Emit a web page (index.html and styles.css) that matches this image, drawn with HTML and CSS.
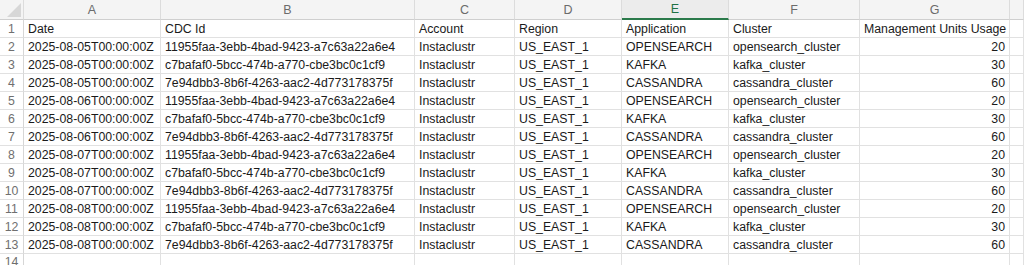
FILE: index.html
```html
<!DOCTYPE html>
<html>
<head>
<meta charset="utf-8">
<link rel="stylesheet" href="styles.css">
</head>
<body>
<div class="sheet">
  <div class="row head">
    <div class="corner"><span class="tri"></span></div>
    <div class="col">A</div><div class="col">B</div><div class="col">C</div><div class="col">D</div>
    <div class="col sel">E</div><div class="col">F</div><div class="col">G</div><div class="col"></div>
  </div>
  <div class="row"><div class="num">1</div><div class="c">Date</div><div class="c">CDC Id</div><div class="c">Account</div><div class="c">Region</div><div class="c">Application</div><div class="c">Cluster</div><div class="c">Management Units Usage</div><div class="c"></div></div>
  <div class="row"><div class="num">2</div><div class="c">2025-08-05T00:00:00Z</div><div class="c">11955faa-3ebb-4bad-9423-a7c63a22a6e4</div><div class="c">Instaclustr</div><div class="c">US_EAST_1</div><div class="c">OPENSEARCH</div><div class="c">opensearch_cluster</div><div class="c r">20</div><div class="c"></div></div>
  <div class="row"><div class="num">3</div><div class="c">2025-08-05T00:00:00Z</div><div class="c">c7bafaf0-5bcc-474b-a770-cbe3bc0c1cf9</div><div class="c">Instaclustr</div><div class="c">US_EAST_1</div><div class="c">KAFKA</div><div class="c">kafka_cluster</div><div class="c r">30</div><div class="c"></div></div>
  <div class="row"><div class="num">4</div><div class="c">2025-08-05T00:00:00Z</div><div class="c">7e94dbb3-8b6f-4263-aac2-4d773178375f</div><div class="c">Instaclustr</div><div class="c">US_EAST_1</div><div class="c">CASSANDRA</div><div class="c">cassandra_cluster</div><div class="c r">60</div><div class="c"></div></div>
  <div class="row"><div class="num">5</div><div class="c">2025-08-06T00:00:00Z</div><div class="c">11955faa-3ebb-4bad-9423-a7c63a22a6e4</div><div class="c">Instaclustr</div><div class="c">US_EAST_1</div><div class="c">OPENSEARCH</div><div class="c">opensearch_cluster</div><div class="c r">20</div><div class="c"></div></div>
  <div class="row"><div class="num">6</div><div class="c">2025-08-06T00:00:00Z</div><div class="c">c7bafaf0-5bcc-474b-a770-cbe3bc0c1cf9</div><div class="c">Instaclustr</div><div class="c">US_EAST_1</div><div class="c">KAFKA</div><div class="c">kafka_cluster</div><div class="c r">30</div><div class="c"></div></div>
  <div class="row"><div class="num">7</div><div class="c">2025-08-06T00:00:00Z</div><div class="c">7e94dbb3-8b6f-4263-aac2-4d773178375f</div><div class="c">Instaclustr</div><div class="c">US_EAST_1</div><div class="c">CASSANDRA</div><div class="c">cassandra_cluster</div><div class="c r">60</div><div class="c"></div></div>
  <div class="row"><div class="num">8</div><div class="c">2025-08-07T00:00:00Z</div><div class="c">11955faa-3ebb-4bad-9423-a7c63a22a6e4</div><div class="c">Instaclustr</div><div class="c">US_EAST_1</div><div class="c">OPENSEARCH</div><div class="c">opensearch_cluster</div><div class="c r">20</div><div class="c"></div></div>
  <div class="row"><div class="num">9</div><div class="c">2025-08-07T00:00:00Z</div><div class="c">c7bafaf0-5bcc-474b-a770-cbe3bc0c1cf9</div><div class="c">Instaclustr</div><div class="c">US_EAST_1</div><div class="c">KAFKA</div><div class="c">kafka_cluster</div><div class="c r">30</div><div class="c"></div></div>
  <div class="row"><div class="num">10</div><div class="c">2025-08-07T00:00:00Z</div><div class="c">7e94dbb3-8b6f-4263-aac2-4d773178375f</div><div class="c">Instaclustr</div><div class="c">US_EAST_1</div><div class="c">CASSANDRA</div><div class="c">cassandra_cluster</div><div class="c r">60</div><div class="c"></div></div>
  <div class="row"><div class="num">11</div><div class="c">2025-08-08T00:00:00Z</div><div class="c">11955faa-3ebb-4bad-9423-a7c63a22a6e4</div><div class="c">Instaclustr</div><div class="c">US_EAST_1</div><div class="c">OPENSEARCH</div><div class="c">opensearch_cluster</div><div class="c r">20</div><div class="c"></div></div>
  <div class="row"><div class="num">12</div><div class="c">2025-08-08T00:00:00Z</div><div class="c">c7bafaf0-5bcc-474b-a770-cbe3bc0c1cf9</div><div class="c">Instaclustr</div><div class="c">US_EAST_1</div><div class="c">KAFKA</div><div class="c">kafka_cluster</div><div class="c r">30</div><div class="c"></div></div>
  <div class="row"><div class="num">13</div><div class="c">2025-08-08T00:00:00Z</div><div class="c">7e94dbb3-8b6f-4263-aac2-4d773178375f</div><div class="c">Instaclustr</div><div class="c">US_EAST_1</div><div class="c">CASSANDRA</div><div class="c">cassandra_cluster</div><div class="c r">60</div><div class="c"></div></div>
  <div class="row last"><div class="num">14</div><div class="c"></div><div class="c"></div><div class="c"></div><div class="c"></div><div class="c"></div><div class="c"></div><div class="c"></div><div class="c"></div></div>
</div>
</body>
</html>
```
FILE: styles.css
```css
html, body {
  margin: 0;
  padding: 0;
  background: #ffffff;
}
body {
  font-family: "Liberation Sans", Arial, sans-serif;
  font-size: 12.3px;
  color: #1a1a1a;
  overflow: hidden;
}
.sheet {
  width: 1024px;
  height: 265px;
  overflow: hidden;
}
.row {
  display: grid;
  grid-template-columns: 24px 137px 254px 100px 107px 107px 131px 150px 1fr;
  height: 18px;
}
.row > div {
  box-sizing: border-box;
  border-right: 1px solid #e1e1e1;
  border-bottom: 1px solid #e1e1e1;
  white-space: nowrap;
  overflow: hidden;
  display: flex;
  align-items: center;
}
.row.last > div {
  align-items: flex-start;
  padding-top: 1px;
}
.row.head {
  height: 20px;
  background: #f4f4f4;
}
.row.head > div {
  border-right: 1px solid #dcdcdc;
  border-bottom: 1px solid #cfcfcf;
  justify-content: center;
  color: #6b6b6b;
  font-size: 12.5px;
}
.row.head > .sel {
  color: #1e7145;
  background: #ececec;
  border-bottom: 2px solid #2b7a4b;
}
.corner {
  position: relative;
}
.tri {
  position: absolute;
  right: 2px;
  bottom: 2px;
  width: 0;
  height: 0;
  border-left: 14px solid transparent;
  border-bottom: 14px solid #d7d7d7;
}
.num {
  justify-content: center;
  color: #6f6f6f;
  background: #ffffff;
  border-right: 1px solid #d6d6d6 !important;
}
.c {
  padding: 0 4px 0 4px;
}
.c.r {
  justify-content: flex-end;
}
```
